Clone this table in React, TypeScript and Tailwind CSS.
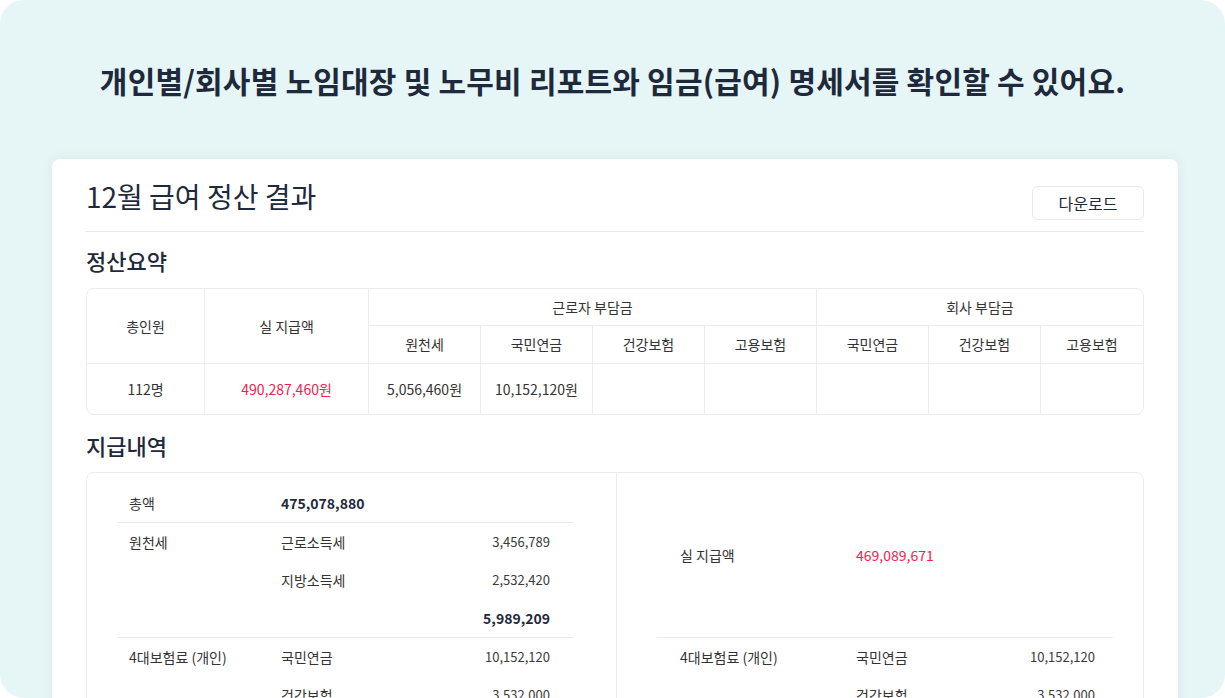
import React from "react";

const workerCols = ["원천세", "국민연금", "건강보험", "고용보험"];
const companyCols = ["국민연금", "건강보험", "고용보험"];
const dataRow = ["5,056,460원", "10,152,120원", "", "", "", "", ""];

function SummaryTable() {
  const cell = "flex items-center justify-center border-[#ececec] text-[14px] text-[#333]";
  return (
    <div className="overflow-hidden rounded-lg border border-[#ececec]">
      <div className="grid grid-cols-[118px_164px_112px_112px_112px_112px_112px_112px_1fr] grid-rows-[37px_38px_50px]">
        <div className={`${cell} row-span-2 border-r border-b`}>총인원</div>
        <div className={`${cell} row-span-2 border-r border-b`}>실 지급액</div>
        <div className={`${cell} col-span-4 border-r border-b`}>근로자 부담금</div>
        <div className={`${cell} col-span-3 border-b`}>회사 부담금</div>
        {[...workerCols, ...companyCols].map((c, i) => (
          <div key={i} className={`${cell} border-b ${i < 6 ? "border-r" : ""}`}>
            {c}
          </div>
        ))}
        <div className={`${cell} border-r`}>112명</div>
        <div className={`${cell} border-r text-[#f0214f]`}>490,287,460원</div>
        {dataRow.map((v, i) => (
          <div key={i} className={`${cell} ${i < 6 ? "border-r" : ""}`}>
            {v}
          </div>
        ))}
      </div>
    </div>
  );
}

interface Row {
  label?: string;
  sub?: string;
  value: string;
  bold?: boolean;
}

function DetailGroup({ rows, labelW, padL, padR, last }: { rows: Row[]; labelW: string; padL: string; padR: string; last?: boolean }) {
  return (
    <div className={`${last ? "" : "border-b"} border-[#ececec] ${padL} ${padR}`}>
      {rows.map((r, i) => (
        <div key={i} className="flex h-[38px] items-center text-[14px]">
          <div className={`${labelW} shrink-0 text-[#333]`}>{r.label}</div>
          <div className="flex-1 text-[#333]">{r.sub}</div>
          <div className={r.bold ? "text-[14px] font-bold text-[#1e293b]" : "text-[13px] text-[#3a3a3a]"}>{r.value}</div>
        </div>
      ))}
    </div>
  );
}

function PaymentDetail() {
  return (
    <div className="flex overflow-hidden rounded-lg border border-[#ececec]">
      {/* left half */}
      <div className="w-[530px] shrink-0 border-r border-[#ececec] pt-[12px] pl-[30px] pr-[43px] pb-[20px]">
        <div className="flex h-[38px] items-center border-b border-[#ececec] pl-[12px] text-[14px]">
          <div className="w-[152px] text-[#333]">총액</div>
          <div className="font-bold text-[#1e293b]">475,078,880</div>
        </div>
        <DetailGroup
          labelW="w-[152px]"
          padL="pl-[12px]"
          padR="pr-[23px]"
          rows={[
            { label: "원천세", sub: "근로소득세", value: "3,456,789" },
            { sub: "지방소득세", value: "2,532,420" },
            { value: "5,989,209", bold: true },
          ]}
        />
        <DetailGroup
          labelW="w-[152px]"
          padL="pl-[12px]"
          padR="pr-[23px]"
          last
          rows={[
            { label: "4대보험료 (개인)", sub: "국민연금", value: "10,152,120" },
            { sub: "건강보험", value: "3,532,000" },
            { sub: "고용보험", value: "1,210,400" },
          ]}
        />
      </div>
      {/* right half */}
      <div className="flex-1 pl-[40px] pr-[30px]">
        <div className="flex h-[165px] items-center border-b border-[#ececec] pl-[23px] text-[14px]">
          <div className="w-[176px] text-[#333]">실 지급액</div>
          <div className="text-[#f0214f]">469,089,671</div>
        </div>
        <DetailGroup
          labelW="w-[176px]"
          padL="pl-[23px]"
          padR="pr-[18px]"
          last
          rows={[
            { label: "4대보험료 (개인)", sub: "국민연금", value: "10,152,120" },
            { sub: "건강보험", value: "3,532,000" },
            { sub: "고용보험", value: "1,210,400" },
          ]}
        />
      </div>
    </div>
  );
}

export default function App() {
  return (
    <div className="h-[698px] w-full overflow-hidden bg-white font-['Noto_Sans_CJK_KR','Noto_Sans',sans-serif]">
      <div className="h-[698px] w-full overflow-hidden rounded-[24px] bg-[#e6f6f7]">
        <h1 className="pt-[60px] text-center text-[30px] leading-[40px] font-bold tracking-[0.2px] text-[#1e293b]">
          개인별/회사별 노임대장 및 노무비 리포트와 임금(급여) 명세서를 확인할 수 있어요.
        </h1>

        <div className="mt-[59px] ml-[52px] w-[1126px] rounded-lg bg-white px-[34px] pb-[40px] shadow-[0_0_14px_rgba(0,0,0,0.06)]">
          <div className="flex h-[73px] items-start justify-between border-b border-[#e8e8e8]">
            <h2 className="mt-[17px] text-[28px] leading-[40px] text-[#1e293b]">12월 급여 정산 결과</h2>
            <button className="mt-[27px] h-[34px] w-[112px] rounded-md border border-[#e8e8e8] text-[16px] text-[#1e293b]">
              다운로드
            </button>
          </div>

          <h3 className="mt-[14px] text-[22px] leading-[28px] font-medium text-[#1e293b]">정산요약</h3>
          <div className="mt-[14px]">
            <SummaryTable />
          </div>

          <h3 className="mt-[16px] text-[22px] leading-[28px] font-medium text-[#1e293b]">지급내역</h3>
          <div className="mt-[13px]">
            <PaymentDetail />
          </div>
        </div>
      </div>
    </div>
  );
}
